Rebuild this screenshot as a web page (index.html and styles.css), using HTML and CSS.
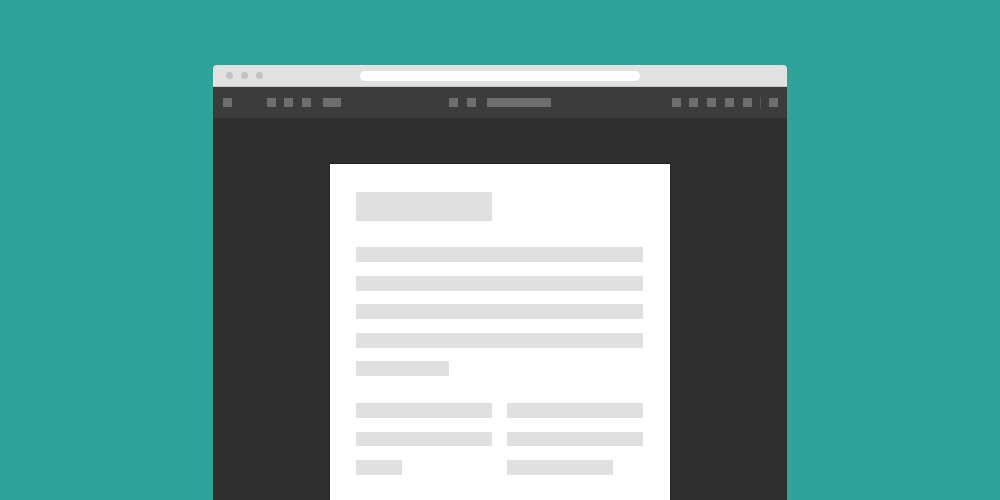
FILE: index.html
```html
<!DOCTYPE html>
<html>
<head>
<meta charset="utf-8">
<link rel="stylesheet" href="styles.css">
</head>
<body>
<div class="window">
  <div class="titlebar">
    <div class="dots"><span class="dot"></span><span class="dot"></span><span class="dot"></span></div>
    <div class="url"></div>
  </div>
  <div class="toolbar">
    <span class="ic m10"></span>
    <span class="ic m35"></span>
    <span class="ic m8"></span>
    <span class="ic m9"></span>
    <span class="ic w18 m12"></span>
    <span class="ic m108"></span>
    <span class="ic m9"></span>
    <span class="ic w64 m11"></span>
    <span class="ic m121"></span>
    <span class="ic m8"></span>
    <span class="ic m9"></span>
    <span class="ic m9"></span>
    <span class="ic m9"></span>
    <span class="divider m8"></span>
    <span class="ic m8"></span>
  </div>
  <div class="content">
    <div class="page">
      <div class="ph title"></div>
      <div class="lines">
        <div class="ph line"></div>
        <div class="ph line"></div>
        <div class="ph line"></div>
        <div class="ph line"></div>
        <div class="ph line short"></div>
      </div>
      <div class="cols">
        <div class="col">
          <div class="ph cline"></div>
          <div class="ph cline"></div>
          <div class="ph cline s1"></div>
        </div>
        <div class="col">
          <div class="ph cline"></div>
          <div class="ph cline"></div>
          <div class="ph cline s2"></div>
        </div>
      </div>
    </div>
  </div>
</div>
</body>
</html>
```
FILE: styles.css
```css
html, body {
  margin: 0;
  padding: 0;
  height: 500px;
  overflow: hidden;
}
body {
  background: #2fa39b;
  display: flex;
  justify-content: center;
  font-family: "Liberation Sans", sans-serif;
}
.window {
  margin-top: 65px;
  width: 574px;
  height: 435px;
  display: flex;
  flex-direction: column;
}
.titlebar {
  height: 21px;
  background: #e1e1e1;
  border-bottom: 1px solid #c9c9c9;
  border-radius: 4px 4px 0 0;
  display: flex;
  align-items: center;
}
.dots {
  display: flex;
  gap: 8px;
  margin-left: 13px;
}
.dot {
  width: 7px;
  height: 7px;
  border-radius: 50%;
  background: #c2c2c2;
}
.url {
  margin-left: 97px;
  width: 280px;
  height: 10px;
  border-radius: 5px;
  background: #ffffff;
}
.toolbar {
  height: 31px;
  background: #3c3c3c;
  display: flex;
  align-items: center;
}
.ic {
  width: 9px;
  height: 9px;
  background: #6e6e6e;
  flex: none;
}
.w18 { width: 18px; }
.w64 { width: 64px; }
.divider {
  width: 1px;
  height: 12px;
  background: #555555;
  flex: none;
}
.m8 { margin-left: 8px; }
.m9 { margin-left: 9px; }
.m10 { margin-left: 10px; }
.m11 { margin-left: 11px; }
.m12 { margin-left: 12px; }
.m35 { margin-left: 35px; }
.m108 { margin-left: 108px; }
.m121 { margin-left: 121px; }
.content {
  flex: 1;
  background: #2f2f2f;
  display: flex;
  justify-content: center;
  padding-top: 46px;
}
.page {
  width: 340px;
  box-sizing: border-box;
  background: #ffffff;
  box-shadow: 0 -1px 0 #1e1e1e, -1px 0 0 #262626, 1px 0 0 #262626;
  padding: 28px 27px 0 26px;
  display: flex;
  flex-direction: column;
}
.ph {
  background: #e0e0e0;
}
.title {
  width: 136px;
  height: 29px;
}
.lines {
  margin-top: 26px;
  display: flex;
  flex-direction: column;
  gap: 13.5px;
}
.line {
  height: 15px;
  width: 287px;
}
.line.short { width: 93px; }
.cols {
  margin-top: 27px;
  display: flex;
  gap: 15px;
}
.col {
  width: 136px;
  display: flex;
  flex-direction: column;
  gap: 14px;
}
.cline {
  height: 14.5px;
  width: 136px;
}
.cline.s1 { width: 46px; }
.cline.s2 { width: 106px; }
```
